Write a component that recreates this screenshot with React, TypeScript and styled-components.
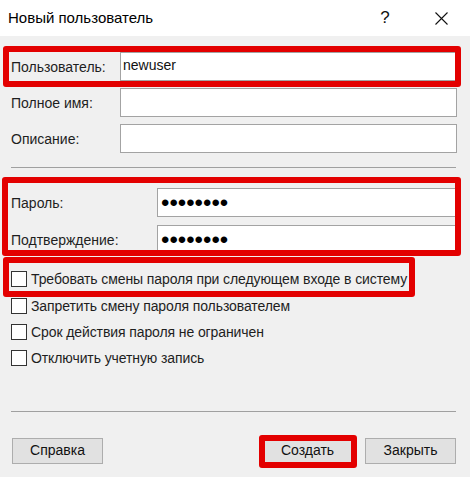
import React from 'react';
import styled, { createGlobalStyle } from 'styled-components';

const GlobalStyle = createGlobalStyle`
    html, body {
        margin: 0;
        padding: 0;
        background: #f0f0f0;
    }
    * {
        box-sizing: border-box;
    }
`;

const Window = styled.div`
    width: 470px;
    height: 477px;
    display: flex;
    flex-direction: column;
    background: #f0f0f0;
    font-family: 'Liberation Sans', Arial, sans-serif;
    font-size: 14px;
    color: #1e1e1e;
    overflow: hidden;
`;

const TitleBar = styled.div`
    height: 36px;
    flex: none;
    display: flex;
    align-items: center;
    background: #ffffff;
    padding-left: 8px;
`;

const Title = styled.span`
    flex: 1;
    font-size: 15px;
    color: #000;
    padding-bottom: 2px;
`;

const CaptionButton = styled.div<{ $width: number }>`
    width: ${({ $width }) => $width}px;
    height: 36px;
    display: flex;
    align-items: center;
    justify-content: center;
    font-size: 17px;
    color: #111;
`;

const Body = styled.div`
    flex: 1;
    display: flex;
    flex-direction: column;
    padding: 16px 13px 0 11px;
`;

const FieldGroup = styled.div<{ $gap: number }>`
    display: flex;
    flex-direction: column;
    gap: ${({ $gap }) => $gap}px;
`;

const FieldRow = styled.div`
    display: flex;
    align-items: center;
    height: 29px;
`;

const Label = styled.span<{ $width: number }>`
    width: ${({ $width }) => $width}px;
    flex: none;
`;

const TextBox = styled.input`
    flex: 1;
    height: 100%;
    min-width: 0;
    border: 1px solid #a3a3a3;
    background: #fff;
    padding: 0 0 3px 2px;
    font-family: 'Liberation Sans', Arial, sans-serif;
    font-size: 14px;
    color: #111;
    outline: none;
`;

const PasswordBox = styled(TextBox)`
    font-size: 24px;
    padding: 0 0 0 3px;
    color: #000;
`;

const Separator = styled.div<{ $top: number; $bottom: number }>`
    height: 1px;
    background: #a0a0a0;
    margin: ${({ $top, $bottom }) => `${$top}px 1px ${$bottom}px 0`};
`;

const Highlight = styled.div<{ $t: number; $r: number; $b: number; $l: number; $fit?: boolean }>`
    position: relative;
    align-self: ${({ $fit }) => ($fit ? 'flex-start' : 'stretch')};

    &::after {
        content: '';
        position: absolute;
        top: ${({ $t }) => -$t}px;
        right: ${({ $r }) => -$r}px;
        bottom: ${({ $b }) => -$b}px;
        left: ${({ $l }) => -$l}px;
        border: 6px solid #e30000;
        border-radius: 3px;
        pointer-events: none;
    }
`;

const CheckList = styled.div`
    display: flex;
    flex-direction: column;
    margin-top: 12px;
`;

const CheckRow = styled.label`
    display: flex;
    align-items: center;
    height: 26.4px;
    gap: 4px;
    white-space: nowrap;
    letter-spacing: -0.1px;
`;

const CheckBox = styled.span`
    width: 16px;
    height: 16px;
    flex: none;
    border: 1px solid #333;
    background: #fff;
`;

const Spacer = styled.div`
    flex: 1;
`;

const ButtonBar = styled.div`
    display: flex;
    align-items: center;
    padding: 0 1px 13px 1px;
    margin-top: 26px;
`;

const DialogButton = styled.button`
    width: 91px;
    height: 26px;
    border: 1px solid #adadad;
    background: #e1e1e1;
    font-family: 'Liberation Sans', Arial, sans-serif;
    font-size: 14px;
    color: #111;
    padding: 0 0 2px;
`;

const RightButtons = styled.div`
    margin-left: auto;
    display: flex;
    gap: 12px;
`;

const checks = [
    'Требовать смены пароля при следующем входе в систему',
    'Запретить смену пароля пользователем',
    'Срок действия пароля не ограничен',
    'Отключить учетную запись',
];

export default function App() {
    return (
        <Window>
            <GlobalStyle />
            <TitleBar>
                <Title>Новый пользователь</Title>
                <CaptionButton $width={46}>?</CaptionButton>
                <CaptionButton $width={10} />
                <CaptionButton $width={46}>
                    <svg width="13" height="13" viewBox="0 0 13 13">
                        <path d="M0.5 0.5 L12.5 12.5 M12.5 0.5 L0.5 12.5" stroke="#111" strokeWidth="1.1" />
                    </svg>
                </CaptionButton>
                <CaptionButton $width={6} />
            </TitleBar>

            <Body>
                <FieldGroup $gap={7}>
                    <Highlight $t={6} $r={4} $b={6} $l={8}>
                        <FieldRow>
                            <Label $width={109}>Пользователь:</Label>
                            <TextBox readOnly value="newuser" />
                        </FieldRow>
                    </Highlight>
                    <FieldRow>
                        <Label $width={109}>Полное имя:</Label>
                        <TextBox readOnly value="" />
                    </FieldRow>
                    <FieldRow>
                        <Label $width={109}>Описание:</Label>
                        <TextBox readOnly value="" />
                    </FieldRow>
                </FieldGroup>

                <Separator $top={14} $bottom={20} />

                <Highlight $t={11} $r={4} $b={2} $l={9}>
                    <FieldGroup $gap={8}>
                        <FieldRow>
                            <Label $width={146}>Пароль:</Label>
                            <PasswordBox type="password" readOnly value="12345678" />
                        </FieldRow>
                        <FieldRow>
                            <Label $width={146}>Подтверждение:</Label>
                            <PasswordBox type="password" readOnly value="12345678" />
                        </FieldRow>
                    </FieldGroup>
                </Highlight>

                <CheckList>
                    {checks.map((text, i) =>
                        i === 0 ? (
                            <Highlight key={text} $t={9} $r={8} $b={5} $l={8} $fit>
                                <CheckRow>
                                    <CheckBox />
                                    {text}
                                </CheckRow>
                            </Highlight>
                        ) : (
                            <CheckRow key={text}>
                                <CheckBox />
                                {text}
                            </CheckRow>
                        ),
                    )}
                </CheckList>

                <Spacer />
                <Separator $top={0} $bottom={0} />

                <ButtonBar>
                    <DialogButton>Справка</DialogButton>
                    <RightButtons>
                        <Highlight $t={3} $r={4} $b={4} $l={3}>
                            <DialogButton>Создать</DialogButton>
                        </Highlight>
                        <DialogButton>Закрыть</DialogButton>
                    </RightButtons>
                </ButtonBar>
            </Body>
        </Window>
    );
}
